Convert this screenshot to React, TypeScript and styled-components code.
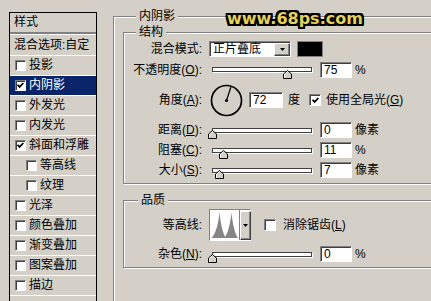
import React from 'react';
import styled, { createGlobalStyle } from 'styled-components';

const BG = '#d4d0c8';

const Global = createGlobalStyle`
  html, body { margin: 0; padding: 0; background: ${BG}; overflow: hidden; }
  body {
    font-family: "Liberation Sans", "Noto Sans CJK SC", sans-serif;
    font-size: 12px;
    color: #000;
  }
  #root { width: 431px; height: 301px; overflow: hidden; }
`;

const Page = styled.div`
  position: relative;
  display: flex;
  align-items: flex-start;
  width: 431px;
  height: 301px;
  padding: 12px 0 0 9px;
  box-sizing: border-box;
  overflow: hidden;
`;

/* ---------- left style list ---------- */
const StyleList = styled.div`
  flex: none;
  width: 88px;
  height: 300px;
  box-sizing: border-box;
  border: 1px solid #000;
  border-bottom: none;
  display: flex;
  flex-direction: column;
  margin-right: 16px;
`;

const ListHeader = styled.div`
  height: 19px;
  line-height: 19px;
  padding-left: 4px;
  border-bottom: 2px solid #808080;
  white-space: nowrap;
`;

const BlendRow = styled.div`
  height: 20px;
  line-height: 20px;
  padding-left: 4px;
  border-top: 1px solid #fff;
  white-space: nowrap;
`;

const ListItem = styled.div<{ $active?: boolean; $indent?: boolean }>`
  height: 19px;
  display: flex;
  align-items: center;
  gap: 3px;
  padding-left: ${p => (p.$indent ? 16 : 5)}px;
  border-top: 1px solid #fff;
  background: ${p => (p.$active ? '#0a246a' : 'transparent')};
  color: ${p => (p.$active ? '#fff' : '#000')};
  white-space: nowrap;
  line-height: 19px;
`;

const ListFiller = styled.div`
  flex: 1;
  border-top: 1px solid #fff;
`;

/* ---------- checkbox ---------- */
const CheckBoxFrame = styled.span<{ $size: number; $ml?: number }>`
  flex: none;
  display: inline-flex;
  align-items: center;
  justify-content: center;
  width: ${p => p.$size}px;
  height: ${p => p.$size}px;
  margin-left: ${p => p.$ml ?? 0}px;
  box-sizing: border-box;
  background: #fff;
  border: 1px solid;
  border-color: #808080 #fff #fff #808080;
  box-shadow: inset 1px 1px 0 #404040;
`;

const CheckBox: React.FC<{ checked?: boolean; size?: number; ml?: number }> = ({ checked, size = 11, ml }) => (
  <CheckBoxFrame $size={size} $ml={ml}>
    {checked && (
      <svg width="7" height="7" viewBox="0 0 7 7">
        <path d="M0.6 2.8 L2.6 4.9 L6.4 1" fill="none" stroke="#000" strokeWidth="1.7" />
      </svg>
    )}
  </CheckBoxFrame>
);

/* ---------- group boxes ---------- */
const OuterGroup = styled.div`
  flex: none;
  margin-top: 4px;
  width: 360px;
  height: 300px;
  box-sizing: border-box;
  border: 1px solid #808080;
  box-shadow: inset 1px 1px 0 #fff, 1px 1px 0 #fff;
  padding-left: 9px;
  display: flex;
  flex-direction: column;
`;

const Group = styled.div<{ $pb: number; $mt?: number }>`
  flex: none;
  width: 340px;
  box-sizing: border-box;
  border: 1px solid #808080;
  box-shadow: inset 1px 1px 0 #fff, 1px 1px 0 #fff;
  margin-top: ${p => p.$mt ?? 0}px;
  padding-bottom: ${p => p.$pb}px;
  display: flex;
  flex-direction: column;
`;

const GroupTitle = styled.div<{ $x: number; $after: number }>`
  align-self: flex-start;
  height: 14px;
  line-height: 14px;
  margin: -8px 0 ${p => p.$after}px ${p => p.$x}px;
  padding: 0 3px;
  background: ${BG};
  white-space: nowrap;
`;

const Row = styled.div<{ $h: number }>`
  flex: none;
  display: flex;
  align-items: center;
  height: ${p => p.$h}px;
  white-space: nowrap;
`;

const Label = styled.div`
  flex: none;
  width: 78px;
  margin-right: 6px;
  text-align: right;
  line-height: 14px;
  white-space: nowrap;
`;

const Key = styled.span`
  text-decoration: underline;
`;

const Text = styled.span<{ $ml?: number }>`
  margin-left: ${p => p.$ml ?? 0}px;
  line-height: 14px;
`;

/* ---------- controls ---------- */
const SelectBox = styled.div`
  display: flex;
  align-items: stretch;
  width: 82px;
  height: 16px;
  margin-left: 1px;
  box-sizing: border-box;
  border: 1px solid;
  border-color: #808080 #fff #fff #808080;
  box-shadow: inset 1px 1px 0 #404040;
  background: #fff;
`;

const SelectText = styled.div`
  flex: 1;
  padding-left: 3px;
  padding-top: 1px;
  line-height: 13px;
`;

const DropButton = styled.div<{ $w: number }>`
  flex: none;
  width: ${p => p.$w}px;
  margin: 1px 0 0 0;
  box-sizing: border-box;
  background: ${BG};
  border: 1px solid;
  border-color: #fff #404040 #404040 #fff;
  box-shadow: inset -1px -1px 0 #808080;
  display: flex;
  align-items: center;
  justify-content: center;
`;

const Arrow = () => (
  <svg width="5" height="3" viewBox="0 0 5 3">
    <path d="M0 0 H5 L2.5 3 Z" fill="#000" />
  </svg>
);

const Swatch = styled.div`
  width: 26px;
  height: 16px;
  margin-left: 6px;
  box-sizing: border-box;
  border: 1px solid #808080;
  background: #000;
`;

const NumBox = styled.div<{ $w: number; $ml: number }>`
  flex: none;
  width: ${p => p.$w}px;
  height: 16px;
  margin-left: ${p => p.$ml}px;
  box-sizing: border-box;
  border: 1px solid;
  border-color: #808080 #fff #fff #808080;
  box-shadow: inset 1px 1px 0 #404040;
  background: #fff;
  padding: 1px 0 0 3px;
  line-height: 13px;
`;

const SliderWrap = styled.div`
  position: relative;
  flex: none;
  width: 105px;
  height: 16px;
  display: flex;
  align-items: center;
`;

const Track = styled.div`
  margin-left: 4px;
  width: 100px;
  height: 5px;
  box-sizing: border-box;
  border: 1px solid #404040;
  background: #fff;
  box-shadow: 1px 1px 0 #fff;
`;

const ThumbHolder = styled.div`
  position: absolute;
  top: 8px;
  width: 9px;
  height: 9px;
  line-height: 0;
`;

const Slider: React.FC<{ value: number }> = ({ value }) => (
  <SliderWrap>
    <Track />
    <ThumbHolder style={{ left: `${4 + value - 4.5}px` }}>
      <svg width="9" height="9" viewBox="0 0 9 9">
        <polygon points="0.5,8.5 0.5,4 4.5,0.5 8.5,4 8.5,8.5" fill={BG} stroke="#000" />
        <polyline points="1.5,7.8 1.5,4.4 4.5,1.8" fill="none" stroke="#fff" />
      </svg>
    </ThumbHolder>
  </SliderWrap>
);

const DialHolder = styled.div`
  flex: none;
  width: 33px;
  height: 33px;
  margin-left: 2px;
  line-height: 0;
`;

const Dial: React.FC<{ angle: number }> = ({ angle }) => {
  const r = 15;
  const c = 16.5;
  const a = (angle * Math.PI) / 180;
  const x = c + Math.cos(a) * (r - 0.5);
  const y = c - Math.sin(a) * (r - 0.5);
  return (
    <DialHolder>
      <svg width="33" height="33" viewBox="0 0 33 33">
        <circle cx={c} cy={c} r={r} fill="none" stroke="#000" strokeWidth="1.7" />
        <line x1={c} y1={c} x2={x} y2={y} stroke="#000" strokeWidth="1.2" />
        <circle cx={c} cy={c} r="1.6" fill="#000" />
      </svg>
    </DialHolder>
  );
};

const ContourPick = styled.div`
  flex: none;
  display: flex;
  width: 42px;
  height: 32px;
  margin-left: 1px;
  box-sizing: border-box;
  border: 1px solid;
  border-color: #808080 #fff #fff #808080;
  background: #fff;
`;

const ContourImage = styled.div`
  flex: none;
  width: 29px;
  height: 30px;
  line-height: 0;
  border-right: 1px solid #808080;
`;

/* ---------- watermark ---------- */
const Watermark = styled.div`
  position: absolute;
  left: 227px;
  top: 11px;
  font-family: "DejaVu Sans", sans-serif;
  font-weight: bold;
  font-size: 16px;
  line-height: 16px;
  letter-spacing: 0;
  color: #e4d15a;
  text-shadow:
    2px 0 0 #000, -2px 0 0 #000, 0 2px 0 #000, 0 -2px 0 #000,
    2px 2px 0 #000, -2px -2px 0 #000, 2px -2px 0 #000, -2px 2px 0 #000,
    1px 2px 0 #000, 2px 1px 0 #000, -1px -2px 0 #000, -2px -1px 0 #000,
    -1px 2px 0 #000, 2px -1px 0 #000, 1px -2px 0 #000, -2px 1px 0 #000;
  white-space: nowrap;
`;

const listItems: { label: string; checked?: boolean; active?: boolean; indent?: boolean }[] = [
  { label: '投影' },
  { label: '内阴影', checked: true, active: true },
  { label: '外发光' },
  { label: '内发光' },
  { label: '斜面和浮雕', checked: true },
  { label: '等高线', indent: true },
  { label: '纹理', indent: true },
  { label: '光泽' },
  { label: '颜色叠加' },
  { label: '渐变叠加' },
  { label: '图案叠加' },
  { label: '描边' },
];

export default function App() {
  return (
    <>
      <Global />
      <Page>
        <StyleList>
          <ListHeader>样式</ListHeader>
          <BlendRow>混合选项:自定</BlendRow>
          {listItems.map(it => (
            <ListItem key={it.label} $active={it.active} $indent={it.indent}>
              <CheckBox checked={it.checked} />
              <span>{it.label}</span>
            </ListItem>
          ))}
          <ListFiller />
        </StyleList>

        <OuterGroup>
          <GroupTitle $x={13} $after={9}>内阴影</GroupTitle>

          <Group $pb={3}>
            <GroupTitle $x={12} $after={0}>结构</GroupTitle>
            <Row $h={20}>
              <Label>混合模式:</Label>
              <SelectBox>
                <SelectText>正片叠底</SelectText>
                <DropButton $w={16}>
                  <Arrow />
                </DropButton>
              </SelectBox>
              <Swatch />
            </Row>
            <Row $h={21}>
              <Label>
                不透明度(<Key>O</Key>):
              </Label>
              <Slider value={75} />
              <NumBox $w={32} $ml={7}>75</NumBox>
              <Text $ml={3}>%</Text>
            </Row>
            <Row $h={40}>
              <Label>
                角度(<Key>A</Key>):
              </Label>
              <Dial angle={72} />
              <NumBox $w={34} $ml={6}>72</NumBox>
              <Text $ml={5}>度</Text>
              <CheckBox checked size={12} ml={9} />
              <Text $ml={5}>
                使用全局光(<Key>G</Key>)
              </Text>
            </Row>
            <Row $h={20}>
              <Label>
                距离(<Key>D</Key>):
              </Label>
              <Slider value={0} />
              <NumBox $w={32} $ml={7}>0</NumBox>
              <Text $ml={3}>像素</Text>
            </Row>
            <Row $h={20}>
              <Label>
                阻塞(<Key>C</Key>):
              </Label>
              <Slider value={11} />
              <NumBox $w={32} $ml={7}>11</NumBox>
              <Text $ml={3}>%</Text>
            </Row>
            <Row $h={20}>
              <Label>
                大小(<Key>S</Key>):
              </Label>
              <Slider value={7} />
              <NumBox $w={32} $ml={7}>7</NumBox>
              <Text $ml={3}>像素</Text>
            </Row>
          </Group>

          <Group $pb={4} $mt={16}>
            <GroupTitle $x={14} $after={-2}>品质</GroupTitle>
            <Row $h={40}>
              <Label>等高线:</Label>
              <ContourPick>
                <ContourImage>
                  <svg width="29" height="30" viewBox="0 0 29 30">
                    <path d="M1.5 28 C5.5 24 8.5 14 9.5 2 C10.5 14 13 24 16 28 Z" fill="#858585" />
                    <path d="M14.5 28 C17.5 24 20.5 14 21.5 2 C22.5 14 25 24 28 28 Z" fill="#858585" />
                  </svg>
                </ContourImage>
                <DropButton $w={11}>
                  <Arrow />
                </DropButton>
              </ContourPick>
              <CheckBox size={12} ml={13} />
              <Text $ml={7}>
                消除锯齿(<Key>L</Key>)
              </Text>
            </Row>
            <Row $h={18}>
              <Label>
                杂色(<Key>N</Key>):
              </Label>
              <Slider value={0} />
              <NumBox $w={32} $ml={7}>0</NumBox>
              <Text $ml={3}>%</Text>
            </Row>
          </Group>
        </OuterGroup>

        <Watermark>www.68ps.com</Watermark>
      </Page>
    </>
  );
}
